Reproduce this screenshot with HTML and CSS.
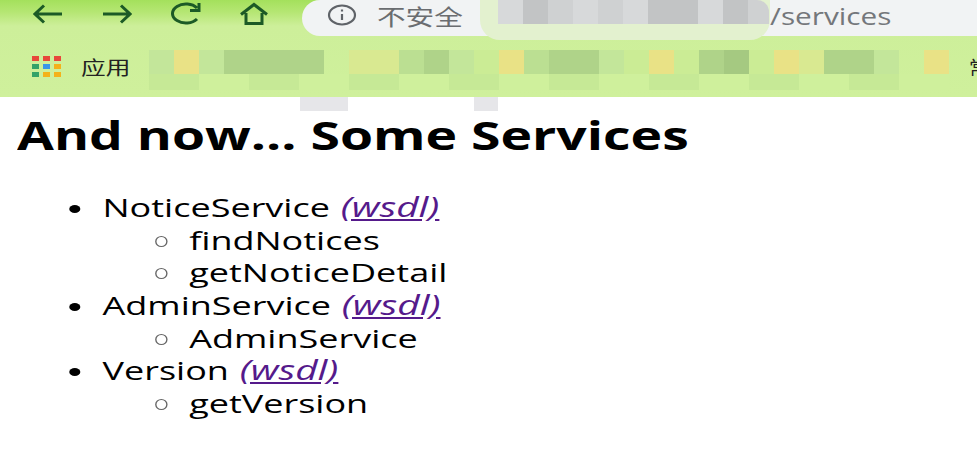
FILE: index.html
```html
<!DOCTYPE html>
<html lang="zh">
<head>
<meta charset="utf-8">
<title>Services</title>
<link rel="stylesheet" href="styles.css">
</head>
<body>
<header class="chrome">
  <div class="toolbar">
    <div class="nav">
      <svg class="ico" width="30" height="22" viewBox="0 0 30 22"><path d="M29 11H2M11 2.500 2 11l9 8.500"/></svg>
      <svg class="ico" width="30" height="22" viewBox="0 0 30 22"><path d="M1 11h27M19 2.500 28 11l-9 8.500"/></svg>
      <svg class="ico" width="32" height="24" viewBox="0 0 32 24"><path d="M26 17a13.500 9.500 0 1 1 0-11M28 1v7.500h-9"/></svg>
      <svg class="ico home" width="30" height="24" viewBox="0 0 30 24"><path d="M2 12.500 15 2.500l13 10M7 11v10.500h16V11"/></svg>
    </div>
    <div class="omnibox">
      <svg class="info" width="30" height="22" viewBox="0 0 30 22"><ellipse cx="15" cy="11" rx="13" ry="9.500"/><path d="M15 10v6M15 5.500v2"/></svg>
      <span class="insecure">不安全</span>
      <span class="path">/services</span>
    </div>
  </div>
  <div class="bookmarks">
    <svg class="apps" width="30" height="22" viewBox="0 0 30 22">
      <rect class="r" x="0" y="0" width="7" height="5"/><rect class="r" x="11" y="0" width="7" height="5"/><rect class="r" x="22" y="0" width="7" height="5"/>
      <rect class="g" x="0" y="8" width="7" height="5"/><rect class="b" x="11" y="8" width="7" height="5"/><rect class="y" x="22" y="8" width="7" height="5"/>
      <rect class="g" x="0" y="16" width="7" height="5"/><rect class="y" x="11" y="16" width="7" height="5"/><rect class="y" x="22" y="16" width="7" height="5"/>
    </svg>
    <span class="apps-label">应用</span>
    <span class="clipped">常</span>
  </div>
  <div class="mask-url">
    <i class="a"></i><i class="c"></i><i class="b2"></i><i class="a"></i><i class="b2"></i><i class="a"></i><i class="c"></i><i class="c"></i><i class="a"></i><i class="c"></i><i class="b2 end"></i>
  </div>
  <div class="mask-bar">
    <i class="l"></i><i class="y"></i><i class="l"></i><i class="d"></i><i class="d"></i><i class="d"></i><i class="d"></i><i></i><i class="s"></i><i class="s"></i><i class="m"></i><i class="d"></i><i class="l"></i><i class="t"></i><i class="y"></i><i class="m"></i><i class="d"></i><i class="d"></i><i class="l"></i><i class="t"></i><i class="y"></i><i class="t"></i><i class="d"></i><i class="x"></i><i class="t"></i><i class="y"></i><i class="s"></i><i class="d"></i><i class="d"></i><i class="l"></i><i></i><i class="y"></i>
  </div>
  <div class="mask-low"></div>
  <span class="smear smear-a"></span>
  <span class="smear smear-b"></span>
</header>
<main class="page">
  <h1>And now... Some Services</h1>
  <ul class="services">
    <li>NoticeService <a href="#">(wsdl)</a>
      <ul><li>findNotices</li><li>getNoticeDetail</li></ul>
    </li>
    <li>AdminService <a href="#">(wsdl)</a>
      <ul><li>AdminService</li></ul>
    </li>
    <li>Version <a href="#">(wsdl)</a>
      <ul><li>getVersion</li></ul>
    </li>
  </ul>
</main>
</body>
</html>
```
FILE: styles.css
```css
* { box-sizing: border-box; }
html, body { margin: 0; padding: 0; background: #fff; overflow: hidden; }
body { width: 977px; height: 449px; font-family: "Open Sans", sans-serif; color: #000; }

.chrome {
  position: relative;
  height: 97px;
  background: linear-gradient(#a4e05c 0, #b5e673 12px, #cdef9a 26px, #cff09c 100%);
}
.toolbar { display: flex; height: 36px; padding-left: 33px; }
.nav { display: flex; align-items: center; gap: 39px; width: 269px; height: 27px; }
.nav .ico { flex: none; fill: none; stroke: #1c5a26; stroke-width: 3; }
.nav .home { margin-left: -3px; }
.omnibox {
  flex: 1;
  display: flex;
  align-items: center;
  background: #f1f3f4;
  border-radius: 18px 0 0 18px;
  padding: 0 0 6px 25px;
  height: 36px;
  position: relative;
}
.info { flex: none; fill: none; stroke: #5f6368; stroke-width: 2.2; }
.insecure {
  display: inline-block;
  width: 68px;
  margin-left: 20px;
  font: 22px "Noto Sans CJK SC", sans-serif;
  color: #6a6d70;
  transform: scaleX(1.3);
  transform-origin: left center;
  white-space: nowrap;
}
.path {
  display: inline-block;
  margin-left: 325px;
  font: 24px "Open Sans", sans-serif;
  color: #74777b;
  transform: scaleX(1.24);
  transform-origin: left center;
}
.bookmarks { position: relative; display: flex; align-items: center; height: 61px; padding: 0 0 0 32px; }
.apps { flex: none; }
.apps .r { fill: #e8483a; }
.apps .g { fill: #35a369; }
.apps .b { fill: #3a96e8; }
.apps .y { fill: #f4b21a; }
.apps-label {
  margin-left: 19px;
  font: 19px "Noto Sans CJK SC", sans-serif;
  color: #222;
  transform: scaleX(1.3);
  transform-origin: left center;
}
.clipped { position: absolute; left: 969px; top: 17px; width: 8px; overflow: hidden; font: 19px "Noto Sans CJK SC", sans-serif; color: #222; }

.mask-url, .mask-bar { position: absolute; display: flex; }
.mask-url i, .mask-bar i { display: block; flex: none; width: 25px; height: 24px; }
.mask-url { left: 498px; top: 0; z-index: 1; isolation: isolate; }
.mask-url .a { background: #d7d9da; }
.mask-url .b2 { background: #cfd1d2; }
.mask-url .c { background: #c2c4c5; }
.mask-url .end { width: 21px; border-radius: 0 12px 0 0; }
.mask-url::before {
  content: "";
  position: absolute;
  left: -18px;
  top: 0;
  width: 290px;
  height: 40px;
  background: #e3f1cf;
  border-radius: 0 0 20px 20px;
  z-index: -1;
}
.mask-bar { left: 149px; top: 50px; }
.mask-bar .l { background: #c3e69a; }
.mask-bar .y { background: #e9e286; }
.mask-bar .d { background: #afd389; }
.mask-bar .s { background: #d9e991; }
.mask-bar .m { background: #bbdf92; }
.mask-bar .t { background: #cbec95; }
.mask-bar .x { background: #a5c981; }
.mask-low {
  position: absolute;
  left: 149px;
  top: 74px;
  width: 800px;
  height: 16px;
  background: repeating-linear-gradient(90deg, #c6e996 0 50px, #cff09c 50px 100px);
}
.smear { position: absolute; display: block; background: #e6e6e9; top: 97px; height: 14px; }
.smear-a { left: 300px; width: 48px; }
.smear-b { left: 474px; width: 24px; }

.page { padding: 0 0 0 17px; }
h1 {
  width: fit-content;
  margin: 14px 0 0;
  font-size: 40px;
  line-height: 48px;
  font-weight: 700;
  white-space: nowrap;
  transform: scaleX(1.337);
  transform-origin: left center;
}
.services {
  width: fit-content;
  list-style: none;
  margin: 32px 0 0 -17px;
  padding: 0 0 0 74px;
  font-size: 26px;
  line-height: 32.67px;
  white-space: nowrap;
  transform: scaleX(1.385);
  transform-origin: left center;
}
.services li::before {
  content: "";
  display: inline-block;
  width: 8px;
  height: 8px;
  margin: 0 15.7px 0 -23.7px;
  border-radius: 50%;
  background: #000;
  vertical-align: 4px;
}
.services ul { list-style: none; margin: 0; padding: 0 0 0 60.6px; }
.services ul li::before {
  width: 7px;
  height: 9px;
  margin: 0 15.3px 0 -22.3px;
  background: none;
  border: 1.5px solid #666;
  vertical-align: 3px;
}
.services a { margin-left: 1px; color: #551a8b; font-size: 28px; line-height: 1; font-style: italic; text-decoration: underline; }
```
